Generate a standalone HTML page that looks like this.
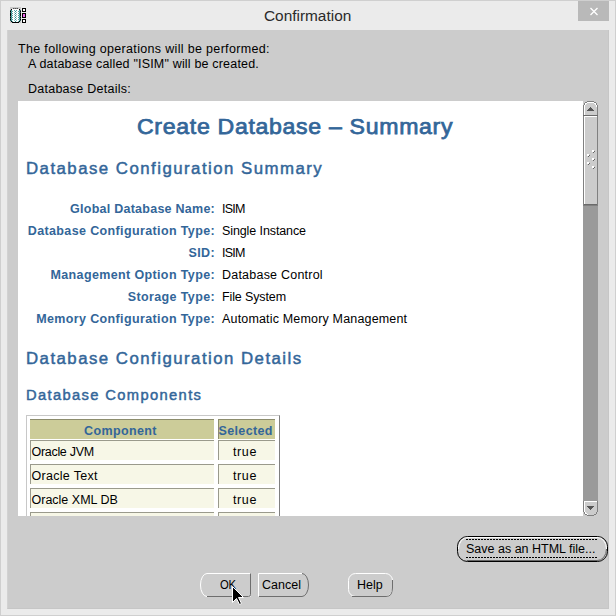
<!DOCTYPE html>
<html><head><meta charset="utf-8">
<style>
*{margin:0;padding:0;box-sizing:border-box}
html,body{width:616px;height:616px;overflow:hidden;background:#ebebeb;font-family:"Liberation Sans",sans-serif}
.a{position:absolute;white-space:nowrap;line-height:1}
#frame{position:absolute;left:0;top:0;width:616px;height:616px;border:1px solid #cfcfcf;background:#ebebeb}
#close{position:absolute;left:578px;top:1px;width:31px;height:20px;background:#b9b9b9}
#content{position:absolute;left:7px;top:30px;width:602px;height:579px;background:#cccccc;border-right:1px solid #c6c6c6;border-bottom:1px solid #c6c6c6;border-left:1px solid #d2d2d2}
#panel{position:absolute;left:18px;top:101px;width:565px;height:415px;background:#fff;overflow:hidden}
.bl{color:#336699;font-weight:bold}
.k{font-size:12.5px;font-weight:bold;color:#336699;letter-spacing:.37px}
.v{font-size:12.5px;color:#000}
.tx{font-size:12.5px;color:#000}
</style></head><body>
<div id="frame"></div>
<div class="a" id="title" style="left:264px;top:7.5px;font-size:15.4px;color:#2a2a2a">Confirmation</div>
<div id="close"><svg width="31" height="20" style="position:absolute;left:0;top:0"><path d="M12.5 7 L19.5 14 M19.5 7 L12.5 14" stroke="#fff" stroke-width="1.3"/></svg></div>
<svg id="icon" width="18" height="18" shape-rendering="crispEdges" style="position:absolute;left:9px;top:6px"><rect x="1" y="1" width="11" height="16" fill="#c8c8c8"/><rect x="4" y="2" width="1" height="1" fill="#505050"/><rect x="5" y="2" width="1" height="1" fill="#8a8a8a"/><rect x="6" y="2" width="1" height="1" fill="#505050"/><rect x="7" y="2" width="1" height="1" fill="#8a8a8a"/><rect x="8" y="2" width="1" height="1" fill="#505050"/><rect x="2" y="3" width="9" height="13" fill="#ffffff"/><rect x="1" y="4" width="11" height="11" fill="#ffffff"/><rect x="2" y="4" width="1" height="1" fill="#2a8a8a"/><rect x="5" y="4" width="1" height="1" fill="#55aaaa"/><rect x="7" y="4" width="1" height="1" fill="#55aaaa"/><rect x="10" y="4" width="1" height="1" fill="#2a8a8a"/><rect x="2" y="5" width="1" height="1" fill="#66b0b0"/><rect x="3" y="5" width="1" height="1" fill="#4a9e9e"/><rect x="6" y="5" width="1" height="1" fill="#2f8f8f"/><rect x="9" y="5" width="1" height="1" fill="#4a9e9e"/><rect x="10" y="5" width="1" height="1" fill="#66b0b0"/><rect x="2" y="6" width="1" height="1" fill="#2a8a8a"/><rect x="5" y="6" width="1" height="1" fill="#88c4c4"/><rect x="7" y="6" width="1" height="1" fill="#88c4c4"/><rect x="10" y="6" width="1" height="1" fill="#2a8a8a"/><rect x="2" y="7" width="1" height="1" fill="#66b0b0"/><rect x="3" y="7" width="1" height="1" fill="#4a9e9e"/><rect x="6" y="7" width="1" height="1" fill="#2f8f8f"/><rect x="9" y="7" width="1" height="1" fill="#4a9e9e"/><rect x="10" y="7" width="1" height="1" fill="#66b0b0"/><rect x="2" y="8" width="1" height="1" fill="#2a8a8a"/><rect x="5" y="8" width="1" height="1" fill="#88c4c4"/><rect x="7" y="8" width="1" height="1" fill="#88c4c4"/><rect x="10" y="8" width="1" height="1" fill="#2a8a8a"/><rect x="2" y="9" width="1" height="1" fill="#66b0b0"/><rect x="3" y="9" width="1" height="1" fill="#4a9e9e"/><rect x="6" y="9" width="1" height="1" fill="#2f8f8f"/><rect x="9" y="9" width="1" height="1" fill="#4a9e9e"/><rect x="10" y="9" width="1" height="1" fill="#66b0b0"/><rect x="2" y="10" width="1" height="1" fill="#2a8a8a"/><rect x="5" y="10" width="1" height="1" fill="#88c4c4"/><rect x="7" y="10" width="1" height="1" fill="#88c4c4"/><rect x="10" y="10" width="1" height="1" fill="#2a8a8a"/><rect x="2" y="11" width="1" height="1" fill="#66b0b0"/><rect x="3" y="11" width="1" height="1" fill="#4a9e9e"/><rect x="6" y="11" width="1" height="1" fill="#2f8f8f"/><rect x="9" y="11" width="1" height="1" fill="#4a9e9e"/><rect x="10" y="11" width="1" height="1" fill="#66b0b0"/><rect x="2" y="12" width="1" height="1" fill="#2a8a8a"/><rect x="5" y="12" width="1" height="1" fill="#88c4c4"/><rect x="7" y="12" width="1" height="1" fill="#88c4c4"/><rect x="10" y="12" width="1" height="1" fill="#2a8a8a"/><rect x="2" y="13" width="1" height="1" fill="#66b0b0"/><rect x="3" y="13" width="1" height="1" fill="#4a9e9e"/><rect x="6" y="13" width="1" height="1" fill="#2f8f8f"/><rect x="9" y="13" width="1" height="1" fill="#4a9e9e"/><rect x="10" y="13" width="1" height="1" fill="#66b0b0"/><rect x="2" y="14" width="1" height="1" fill="#2a8a8a"/><rect x="5" y="14" width="1" height="1" fill="#88c4c4"/><rect x="7" y="14" width="1" height="1" fill="#88c4c4"/><rect x="10" y="14" width="1" height="1" fill="#2a8a8a"/><rect x="2" y="15" width="1" height="1" fill="#66b0b0"/><rect x="3" y="15" width="1" height="1" fill="#4a9e9e"/><rect x="6" y="15" width="1" height="1" fill="#2f8f8f"/><rect x="9" y="15" width="1" height="1" fill="#4a9e9e"/><rect x="10" y="15" width="1" height="1" fill="#66b0b0"/><rect x="2" y="3" width="1" height="1" fill="#000"/><rect x="10" y="3" width="1" height="1" fill="#000"/><rect x="1" y="4" width="1" height="1" fill="#305858"/><rect x="11" y="4" width="1" height="1" fill="#305858"/><rect x="1" y="5" width="1" height="1" fill="#000"/><rect x="11" y="5" width="1" height="1" fill="#000"/><rect x="1" y="6" width="1" height="1" fill="#305858"/><rect x="11" y="6" width="1" height="1" fill="#305858"/><rect x="1" y="7" width="1" height="1" fill="#000"/><rect x="11" y="7" width="1" height="1" fill="#000"/><rect x="1" y="8" width="1" height="1" fill="#000"/><rect x="11" y="8" width="1" height="1" fill="#000"/><rect x="1" y="9" width="1" height="1" fill="#000"/><rect x="11" y="9" width="1" height="1" fill="#000"/><rect x="1" y="10" width="1" height="1" fill="#305858"/><rect x="11" y="10" width="1" height="1" fill="#305858"/><rect x="1" y="11" width="1" height="1" fill="#000"/><rect x="11" y="11" width="1" height="1" fill="#000"/><rect x="1" y="12" width="1" height="1" fill="#305858"/><rect x="11" y="12" width="1" height="1" fill="#305858"/><rect x="1" y="13" width="1" height="1" fill="#000"/><rect x="11" y="13" width="1" height="1" fill="#000"/><rect x="1" y="14" width="1" height="1" fill="#305858"/><rect x="11" y="14" width="1" height="1" fill="#305858"/><rect x="2" y="15" width="1" height="1" fill="#000"/><rect x="10" y="15" width="1" height="1" fill="#000"/><rect x="3" y="16" width="7" height="1" fill="#000"/><rect x="13" y="2" width="4" height="4" fill="#000"/><rect x="14" y="3" width="2" height="2" fill="#fff"/><rect x="13" y="7" width="4" height="5" fill="#000"/><rect x="14" y="8" width="2" height="3" fill="#ee66ee"/><rect x="13" y="13" width="4" height="4" fill="#000"/><rect x="14" y="14" width="2" height="2" fill="#fff"/></svg>
<div id="content"></div>
<div class="a tx" id="t1" style="left:18px;top:43px;letter-spacing:.33px">The following operations will be performed:</div>
<div class="a tx" id="t2" style="left:28px;top:58px;letter-spacing:.18px">A database called "ISIM" will be created.</div>
<div class="a tx" id="t3" style="left:28px;top:83px;letter-spacing:.25px">Database Details:</div>

<div id="panel">
  <div class="a bl" id="h1" style="left:119px;top:15px;font-size:22px;font-weight:normal;-webkit-text-stroke:.75px #336699;letter-spacing:.65px;transform:scaleX(1.05);transform-origin:0 0">Create Database &#8211; Summary</div>
  <div class="a bl" id="h2" style="left:8px;top:60px;font-size:16px;font-weight:normal;-webkit-text-stroke:.45px #336699;letter-spacing:1.4px;transform:scaleX(1.05);transform-origin:0 0">Database Configuration Summary</div>

  <div class="a k" id="k1" style="right:368px;top:102px;letter-spacing:.25px">Global Database Name:</div>
  <div class="a k" id="k2" style="right:368px;top:124px">Database Configuration Type:</div>
  <div class="a k" id="k3" style="right:368px;top:146px">SID:</div>
  <div class="a k" id="k4" style="right:368px;top:168px">Management Option Type:</div>
  <div class="a k" id="k5" style="right:368px;top:190px">Storage Type:</div>
  <div class="a k" id="k6" style="right:368px;top:212px">Memory Configuration Type:</div>

  <div class="a v" id="v1" style="left:204px;top:102px;letter-spacing:-.8px">ISIM</div>
  <div class="a v" id="v2" style="left:204px;top:124px;letter-spacing:-.1px">Single Instance</div>
  <div class="a v" id="v3" style="left:204px;top:146px;letter-spacing:-.8px">ISIM</div>
  <div class="a v" id="v4" style="left:204px;top:168px;letter-spacing:.22px">Database Control</div>
  <div class="a v" id="v5" style="left:204px;top:190px;letter-spacing:-.12px">File System</div>
  <div class="a v" id="v6" style="left:204px;top:212px;letter-spacing:.17px">Automatic Memory Management</div>

  <div class="a bl" id="h3" style="left:8px;top:250px;font-size:16px;font-weight:normal;-webkit-text-stroke:.45px #336699;letter-spacing:1.4px;transform:scaleX(1.05);transform-origin:0 0">Database Configuration Details</div>
  <div class="a bl" id="h4" style="left:8px;top:286.5px;font-size:14px;font-weight:normal;-webkit-text-stroke:.45px #336699;letter-spacing:1.3px;transform:scaleX(1.05);transform-origin:0 0">Database Components</div>

  <!-- table -->
  <div style="position:absolute;left:8px;top:314px;width:254px;height:120px;border:1px solid #c8c8c8;border-right-color:#808080;border-bottom-color:#808080"></div>
  <div style="position:absolute;left:12px;top:318px;width:184px;height:20px;background:#cccc99;border-top:1px solid #8c8c6c"></div>
  <div style="position:absolute;left:200px;top:318px;width:57px;height:20px;background:#cccc99;border-top:1px solid #8c8c6c;border-left:1px solid #8c8c6c"></div>
  <div class="a k" id="c1" style="left:66px;top:324px">Component</div>
  <div class="a k" id="c2" style="left:200.5px;top:324px">Selected</div>

  <div style="position:absolute;left:12px;top:339px;width:184px;height:20px;background:#f7f7e7;border-top:1px solid #9a9a8c;border-left:1px solid #9a9a8c"></div>
  <div style="position:absolute;left:200px;top:339px;width:57px;height:20px;background:#f7f7e7;border-top:1px solid #9a9a8c;border-left:1px solid #9a9a8c"></div>
  <div style="position:absolute;left:12px;top:363px;width:184px;height:20px;background:#f7f7e7;border-top:1px solid #9a9a8c;border-left:1px solid #9a9a8c"></div>
  <div style="position:absolute;left:200px;top:363px;width:57px;height:20px;background:#f7f7e7;border-top:1px solid #9a9a8c;border-left:1px solid #9a9a8c"></div>
  <div style="position:absolute;left:12px;top:387px;width:184px;height:20px;background:#f7f7e7;border-top:1px solid #9a9a8c;border-left:1px solid #9a9a8c"></div>
  <div style="position:absolute;left:200px;top:387px;width:57px;height:20px;background:#f7f7e7;border-top:1px solid #9a9a8c;border-left:1px solid #9a9a8c"></div>
  <div style="position:absolute;left:12px;top:411px;width:184px;height:20px;background:#f7f7e7;border-top:1px solid #9a9a8c;border-left:1px solid #9a9a8c"></div>
  <div style="position:absolute;left:200px;top:411px;width:57px;height:20px;background:#f7f7e7;border-top:1px solid #9a9a8c;border-left:1px solid #9a9a8c"></div>

  <div class="a v" id="r1" style="left:13.5px;letter-spacing:-.3px;top:345px">Oracle JVM</div>
  <div class="a v" id="r2" style="left:13.5px;letter-spacing:.3px;top:369px">Oracle Text</div>
  <div class="a v" id="r3" style="left:13.5px;top:393px">Oracle XML DB</div>
  <div class="a v" id="s1" style="left:215px;letter-spacing:.6px;top:345px">true</div>
  <div class="a v" id="s2" style="left:215px;letter-spacing:.6px;top:369px">true</div>
  <div class="a v" id="s3" style="left:215px;letter-spacing:.6px;top:393px">true</div>
</div>

<!-- scrollbar -->
<svg id="sb" width="15" height="415" shape-rendering="crispEdges" style="position:absolute;left:583px;top:101px">
  <rect x="0" y="104" width="15" height="296" fill="#9a9a9a"/>
  <!-- up button -->
  <path d="M0.5 15 V6 A5.5 5.5 0 0 1 6 0.5 H9 A5.5 5.5 0 0 1 14.5 6 V15" fill="#cccccc" stroke="#808080"/>
  <path d="M1.5 14 V6 A4.5 4.5 0 0 1 6 1.5 H9 A4.5 4.5 0 0 1 13.5 6" fill="none" stroke="#fff"/>
  <path d="M4 10 L7.5 6 L11 10 Z" fill="#555"/>
  <rect x="0" y="14" width="15" height="1" fill="#6a6a6a"/>
  <!-- thumb -->
  <rect x="0.5" y="15" width="14" height="89" fill="#cccccc" stroke="#808080"/>
  <rect x="1" y="15" width="1" height="88" fill="#fff"/>
  <rect x="1" y="15" width="13" height="1" fill="#fff"/>
  <rect x="1" y="103" width="13" height="1" fill="#6a6a6a"/>
  <g fill="#fff"><rect x="9" y="49" width="2" height="2"/><rect x="4" y="53" width="2" height="2"/><rect x="9" y="57" width="2" height="2"/><rect x="4" y="61" width="2" height="2"/><rect x="9" y="65" width="2" height="2"/></g>
  <g fill="#666"><rect x="11" y="50" width="1" height="1"/><rect x="10" y="51" width="1" height="1"/><rect x="6" y="54" width="1" height="1"/><rect x="5" y="55" width="1" height="1"/><rect x="11" y="58" width="1" height="1"/><rect x="10" y="59" width="1" height="1"/><rect x="6" y="62" width="1" height="1"/><rect x="5" y="63" width="1" height="1"/><rect x="11" y="66" width="1" height="1"/><rect x="10" y="67" width="1" height="1"/></g>
  <!-- down button -->
  <path d="M0.5 400 V409 A5.5 5.5 0 0 0 6 414.5 H9 A5.5 5.5 0 0 0 14.5 409 V400" fill="#cccccc" stroke="#808080"/>
  <rect x="1" y="400" width="13" height="1" fill="#fff"/>
  <path d="M1.5 400 V409 A4.5 4.5 0 0 0 5 413.3" fill="none" stroke="#fff"/>
  <path d="M4 405 L11 405 L7.5 409 Z" fill="#555"/>
</svg>

<!-- buttons -->
<svg id="btns" width="616" height="80" style="position:absolute;left:0;top:530px">
  <!-- save -->
  <rect x="457.5" y="6.5" width="150" height="25" rx="10" fill="#cccccc" stroke="#000"/><path d="M468 7.5 H597 A9 11.5 0 0 1 606.5 19" fill="none" stroke="#fff"/><path d="M458.5 19 A9 11.5 0 0 1 468 7.5" fill="none" stroke="#fff"/><path d="M467 30.5 H597 A9 11.5 0 0 0 606.5 19" fill="none" stroke="#666"/>
  <path d="M466 9.5 H598 M466 27.5 H598" stroke="#000" stroke-dasharray="2 1"/>
  <!-- OK -->
  <path d="M250.5 43.5 H207 A6.5 11.5 0 0 0 207 66.5 H250.5" fill="none" stroke="#fff"/>
  <path d="M207 66.5 H248.5 Q250.5 66.5 250.5 64.5 V43.5" fill="none" stroke="#6e6e6e"/>
  <!-- Cancel -->
  <path d="M258.5 66.5 V43.5 H302 " fill="none" stroke="#fff"/>
  <path d="M259 66.5 H302 A6.5 11.5 0 0 0 302 43.5" fill="none" stroke="#6e6e6e"/>
  <!-- Help -->
  <rect x="348.5" y="43.5" width="44" height="23" rx="7" fill="none" stroke="#fff"/>
  <path d="M352 66.5 H386 Q392.5 66.5 392.5 58 V50" fill="none" stroke="#6e6e6e"/>
</svg>
<div class="a tx" id="bs" style="left:466px;top:543px;font-size:12.5px">Save as an HTML file...</div>
<div class="a tx" id="bok" style="left:219.5px;top:579px;font-size:12.5px;letter-spacing:-.3px;transform:scaleX(.9);transform-origin:0 0">OK</div>
<div class="a tx" id="bc" style="left:262px;top:579px;font-size:12.5px">Cancel</div>
<div class="a tx" id="bh" style="left:357px;top:579px;font-size:12.5px">Help</div>

<!-- cursor -->
<svg width="14" height="21" style="position:absolute;left:231px;top:585px">
  <path d="M1.5 1.5 V17.5 L5.5 13.5 L8.5 19.5 L10.5 18.5 L7.5 12.5 H12.5 Z" fill="#000" stroke="#fff" stroke-width="1"/>
</svg>
</body></html>
